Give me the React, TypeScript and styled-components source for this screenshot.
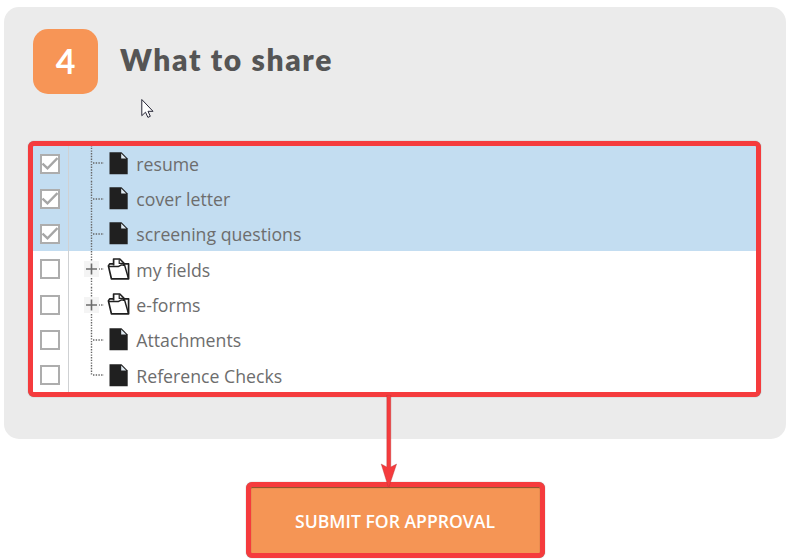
import React from "react";
import styled, { createGlobalStyle } from "styled-components";

const Global = createGlobalStyle`
  * { box-sizing: border-box; }
  body { margin: 0; background: #fff; overflow: hidden; font-family: "Open Sans", "Noto Sans", sans-serif; }
`;

const Page = styled.main`
  position: relative;
  width: 791px;
  height: 559px;
  padding: 7px 5px 0 4px;
  overflow: hidden;
`;

const Card = styled.section`
  height: 432px;
  padding: 22px 25px 0 24px;
  border-radius: 15px;
  background: #ebebeb;
`;

const Header = styled.header`
  display: flex;
  align-items: center;
  height: 65px;
  padding-left: 5px;
`;

const Step = styled.span`
  display: flex;
  align-items: center;
  justify-content: center;
  width: 65px;
  height: 65px;
  padding-bottom: 2px;
  border-radius: 15px;
  background: #f79556;
  color: #fff;
  font: 700 34px/1 Lato, sans-serif;
`;

const Title = styled.h1`
  margin: 0 0 5px 22px;
  color: #555;
  font: 800 30px/36px Lato, sans-serif;
  letter-spacing: 1.65px;
  white-space: nowrap;
`;

const Tree = styled.div`
  height: 256px;
  margin-top: 47px;
  border: 5px solid #f53b3d;
  border-radius: 6px;
  background: #fff;
  box-shadow: 0 0 1px #777, inset 0 1px 1px #536270;
  overflow: hidden;
`;

const Rows = styled.div`
  margin-top: -0.6px;
`;

const Row = styled.div<{ $selected?: boolean }>`
  display: flex;
  height: 35.3px;
  background: ${(p) => (p.$selected ? "#c3ddf1" : "#fff")};
`;

const CheckCell = styled.div`
  display: flex;
  align-items: center;
  width: 36px;
  padding: 1px 0 0 7px;
  border-right: 1px solid #cfd1d3;
`;

const CheckBox = styled.span`
  display: flex;
  width: 20px;
  height: 20px;
  border: 2px solid #adadad;
  background: #fff;
`;

const Branch = styled.svg`
  display: block;
  flex: none;
  width: 36px;
  height: 35.3px;
`;

const Icon = styled.svg`
  flex: none;
  width: 26px;
  height: 26px;
  margin-top: 4.4px;
`;

const Label = styled.span`
  margin-left: 5.3px;
  padding-top: 0.4px;
  color: #6d6d6d;
  font-size: 17.7px;
  line-height: 36px;
  white-space: nowrap;
`;

const Submit = styled.button`
  display: flex;
  align-items: center;
  justify-content: center;
  width: 299px;
  height: 76px;
  margin: 43px 0 0 242px;
  padding: 1px 1px 0 0;
  border: 5px solid #f53b3d;
  border-radius: 6px;
  background: #f59555;
  box-shadow: 0 0 1px #777, inset 0 1px 1px #85502c;
  color: #fff;
  font: 600 17.6px/24px "Open Sans", sans-serif;
  white-space: nowrap;
`;

const Arrow = styled.svg`
  position: absolute;
  left: 376px;
  top: 395px;
  width: 26px;
  height: 94px;
`;

const Pointer = styled.svg`
  position: absolute;
  left: 140px;
  top: 98px;
  width: 14px;
  height: 22px;
`;

type Item = { name: string; folder?: boolean; checked?: boolean };

const items: Item[] = [
  { name: "resume", checked: true },
  { name: "cover letter", checked: true },
  { name: "screening questions", checked: true },
  { name: "my fields", folder: true },
  { name: "e-forms", folder: true },
  { name: "Attachments" },
  { name: "Reference Checks" },
];

function Connector({ folder, last }: { folder?: boolean; last: boolean }) {
  return (
    <Branch viewBox="0 0 36 35.3">
      <path d={last ? "M22.5 0V18" : "M22.5 0V35.3"} stroke="#666" strokeWidth="1.4" strokeDasharray="1.4 1.3" />
      <path d="M24 18H35" stroke="#666" strokeWidth="1.3" strokeDasharray="1.4 1.3" />
      {folder && (
        <>
          <path d="M15 10h15v16H15z" fill="#f4f4f4" />
          <path d="M17 18h11M22.5 12.5v11" stroke="#6c6c6c" strokeWidth="1.6" />
        </>
      )}
    </Branch>
  );
}

function FileIcon() {
  return (
    <Icon viewBox="0 0 26 26">
      <path d="M4.5 2.2h12l6.2 6.2v15.9H4.5z" fill="#202020" />
      <path d="M16.2 3.4v5h5z" fill="#e0eaf2" />
    </Icon>
  );
}

function FolderIcon() {
  return (
    <Icon viewBox="0 0 26 26" fill="none" stroke="#202020" strokeWidth="1.7" strokeLinejoin="round">
      <path d="M18.8 7.8h4.8v15H6.4L3.4 9.9l1.3-2h3.6" />
      <path d="M8.6 9.6V3h6.2l4 4v3" />
      <path d="M14.2 3.4v4h4.4" strokeWidth="1.2" />
      <path d="M3.6 10.6h9.6l2.8-1.5h3.6l3.9 13.5" strokeWidth="1.5" />
    </Icon>
  );
}

export default function App() {
  return (
    <>
      <Global />
      <Page>
        <Card>
          <Header>
            <Step>4</Step>
            <Title>What to share</Title>
          </Header>
          <Tree>
            <Rows>
              {items.map((item, i) => (
                <Row key={item.name} $selected={item.checked}>
                  <CheckCell>
                    <CheckBox role="checkbox" aria-checked={!!item.checked} aria-label={item.name}>
                      {item.checked && (
                        <svg width="16" height="16" viewBox="0 0 16 16" fill="none">
                          <path d="M0.5 7.5 5.5 12.4 15.5 2" stroke="#a6a6a6" strokeWidth="2.4" />
                        </svg>
                      )}
                    </CheckBox>
                  </CheckCell>
                  <Connector folder={item.folder} last={i === items.length - 1} />
                  {item.folder ? <FolderIcon /> : <FileIcon />}
                  <Label>{item.name}</Label>
                </Row>
              ))}
            </Rows>
          </Tree>
        </Card>
        <Submit>SUBMIT FOR APPROVAL</Submit>
        <Arrow viewBox="0 0 26 94">
          <path d="M10.8 0h4v72l5.8-3-8 24-7.4-24 5.6 3z" fill="#f53b3d" stroke="#a33" strokeWidth=".35" />
        </Arrow>
        <Pointer viewBox="0 0 14 22">
          <path d="M1.8 1.5v16.2l3.7-3.5 2.4 5.2 2.4-1.1-2.3-5h5z" fill="#fff" stroke="#252535" strokeWidth="1" />
        </Pointer>
      </Page>
    </>
  );
}
